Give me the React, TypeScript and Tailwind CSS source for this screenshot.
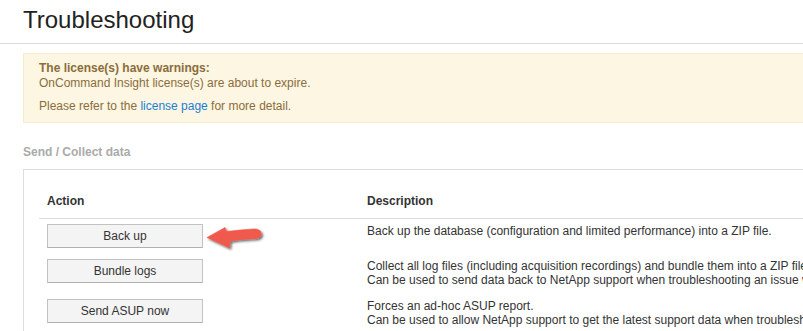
import React, { FC } from 'react';

interface ActionRow {
    label: string;
    lines: string[];
    pointer?: boolean;
}

const rows: ActionRow[] = [
    {
        label: "Back up",
        lines: ["Back up the database (configuration and limited performance) into a ZIP file."],
        pointer: true,
    },
    {
        label: "Bundle logs",
        lines: [
            "Collect all log files (including acquisition recordings) and bundle them into a ZIP file.",
            "Can be used to send data back to NetApp support when troubleshooting an issue with a data source.",
        ],
    },
    {
        label: "Send ASUP now",
        lines: [
            "Forces an ad-hoc ASUP report.",
            "Can be used to allow NetApp support to get the latest support data when troubleshooting an issue.",
        ],
    },
];

const Pointer: FC = () => (
    <svg width="58" height="24" viewBox="0 0 58 24" className="ml-[2px] overflow-visible shrink-0">
        <defs>
            <filter id="arrowShadow" x="-20%" y="-30%" width="150%" height="180%">
                <feDropShadow dx="1.5" dy="1.5" stdDeviation="1" floodColor="#000" floodOpacity="0.6" />
            </filter>
        </defs>
        <path
            d="M2 13.5 L20 3.5 L21.5 7.5 C30 6.5 40 5.5 49 5 C55 4.8 57 8.5 56 11.5 C55 14 52.5 14.6 48 14.8 C38 15.3 31 16 25 17.3 L24.5 24 Z"
            fill="#ef5a4e"
            stroke="#ef5a4e"
            strokeWidth="0.6"
            strokeLinejoin="round"
            filter="url(#arrowShadow)"
        />
    </svg>
);

const App: FC = () => {
    return (
        <div className="w-full h-[331px] overflow-hidden bg-white" style={{ fontFamily: '"Liberation Sans", Arial, sans-serif' }}>
            <div className="w-[1200px]">
                <div className="pt-[6px] pb-[9px] pl-[23px] border-b border-[#dcdcdc]">
                    <h1 className="text-[24px] leading-[28px] text-[#222]">Troubleshooting</h1>
                </div>

                <div className="ml-[23px] mt-[9px] border border-[#f6ebcf] bg-[#fdf6e3] pt-[7px] pb-[8px] px-[15px] text-[12px] leading-[15px] text-[#8a6d3b]">
                    <div className="font-bold">The license(s) have warnings:</div>
                    <div>OnCommand Insight license(s) are about to expire.</div>
                    <p className="mt-[8px]">
                        Please refer to the <a href="#" className="text-[#1b7fd4]">license page</a> for more detail.
                    </p>
                </div>

                <div className="ml-[23px] mt-[22px] text-[12px] leading-[15px] font-bold text-[#aaaaaa]">Send / Collect data</div>

                <div className="ml-[23px] mt-[9px] border border-[#dddddd] p-[15px]">
                    <table className="w-full border-collapse text-[12px] text-[#333]">
                        <thead>
                            <tr className="border-b border-[#dddddd]">
                                <th className="w-[320px] text-left font-bold leading-[15px] pl-[8px] pt-[9px] pb-[9px]">Action</th>
                                <th className="text-left font-bold leading-[15px] pl-[8px] pt-[9px] pb-[9px]">Description</th>
                            </tr>
                        </thead>
                        <tbody>
                            {rows.map((row) => (
                                <tr key={row.label}>
                                    <td className="align-top pl-[8px] pt-[5px] pb-[6px]">
                                        <div className="flex items-start">
                                            <button className="w-[156px] h-[24px] bg-[#f4f4f4] border border-[#c2c2c2] border-b-[#b0b0b0] text-[12px] text-[#333] shrink-0">
                                                {row.label}
                                            </button>
                                            {row.pointer && <Pointer />}
                                        </div>
                                    </td>
                                    <td className="align-top pl-[8px] pt-[5px] pb-[6px] leading-[14.4px] whitespace-nowrap">
                                        {row.lines.map((line) => (
                                            <div key={line}>{line}</div>
                                        ))}
                                    </td>
                                </tr>
                            ))}
                        </tbody>
                    </table>
                </div>
            </div>
        </div>
    );
};

export default App;
